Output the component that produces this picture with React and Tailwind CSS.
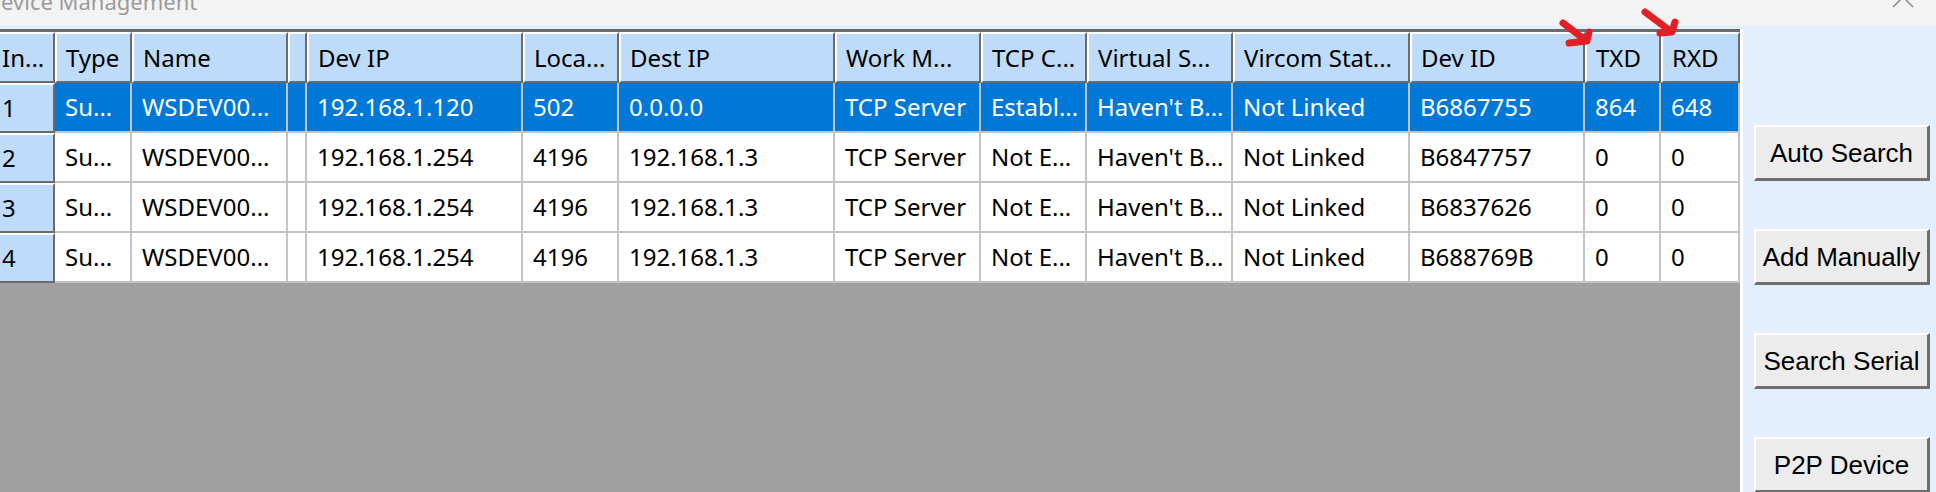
import React from 'react';

// columns of the device grid, widths include the 2px right grid line
const cols = [
  { title: 'In...', w: 'w-[55px]' },
  { title: 'Type', w: 'w-[77px]' },
  { title: 'Name', w: 'w-[156px]' },
  { title: '', w: 'w-[19px]' },
  { title: 'Dev IP', w: 'w-[216px]' },
  { title: 'Loca...', w: 'w-[96px]' },
  { title: 'Dest IP', w: 'w-[216px]' },
  { title: 'Work M...', w: 'w-[146px]' },
  { title: 'TCP C...', w: 'w-[106px]' },
  { title: 'Virtual S...', w: 'w-[146px]' },
  { title: 'Vircom Stat...', w: 'w-[177px]' },
  { title: 'Dev ID', w: 'w-[175px]' },
  { title: 'TXD', w: 'w-[76px]' },
  { title: 'RXD', w: 'w-[79px]' },
];

const rows = [
  ['1', 'Su...', 'WSDEV00...', '', '192.168.1.120', '502', '0.0.0.0', 'TCP Server', 'Establ...', "Haven't B...", 'Not Linked', 'B6867755', '864', '648'],
  ['2', 'Su...', 'WSDEV00...', '', '192.168.1.254', '4196', '192.168.1.3', 'TCP Server', 'Not E...', "Haven't B...", 'Not Linked', 'B6847757', '0', '0'],
  ['3', 'Su...', 'WSDEV00...', '', '192.168.1.254', '4196', '192.168.1.3', 'TCP Server', 'Not E...', "Haven't B...", 'Not Linked', 'B6837626', '0', '0'],
  ['4', 'Su...', 'WSDEV00...', '', '192.168.1.254', '4196', '192.168.1.3', 'TCP Server', 'Not E...', "Haven't B...", 'Not Linked', 'B688769B', '0', '0'],
];

const buttons = ['Auto Search', 'Add Manually', 'Search Serial', 'P2P Device'];

function HeaderRow() {
  return (
    <div className="flex h-[51px] shrink-0">
      {cols.map((c, i) =>
        i === 0 ? (
          <div key={i} className={`${c.w} shrink-0 flex items-center pl-[2px] bg-[#bedcfa] border-t-2 border-t-white border-r-2 border-b-2 border-r-[#6b6b6b] border-b-[#6b6b6b]`}>
            <span className="leading-none whitespace-nowrap">{c.title}</span>
          </div>
        ) : (
          <div key={i} className={`${c.w} shrink-0 flex items-center pl-[9px] bg-[#bedcfa] border-t-2 border-l-2 border-t-white border-l-white border-r-2 border-b-2 border-r-[#6b6b6b] border-b-[#6b6b6b] overflow-hidden`}>
            <span className="leading-none whitespace-nowrap">{c.title}</span>
          </div>
        )
      )}
    </div>
  );
}

function DataRow({ cells, selected }) {
  return (
    <div className="flex h-[50px] shrink-0">
      {cells.map((v, i) =>
        i === 0 ? (
          <div key={i} className={`${cols[i].w} shrink-0 flex items-center pl-[2px] bg-[#bedcfa] border-t-2 border-t-white border-r-2 border-b-2 border-r-[#6b6b6b] border-b-[#6b6b6b]`}>
            <span className="leading-none">{v}</span>
          </div>
        ) : (
          <div
            key={i}
            className={`${cols[i].w} shrink-0 flex items-center pl-[10px] border-r-2 border-b-2 border-[#c3c3c3] overflow-hidden ${selected ? 'bg-[#0078d7] text-white' : 'bg-white text-black'}`}
          >
            <span className="leading-none whitespace-nowrap">{v}</span>
          </div>
        )
      )}
    </div>
  );
}

export default function App() {
  return (
    <div className="relative w-[1936px] h-[492px] overflow-hidden bg-[#e3effd] flex flex-col font-['Noto_Sans',sans-serif] text-[24px] text-black">
      {/* title bar, mostly scrolled off the top */}
      <div className="h-[25px] shrink-0 bg-[#f3f3f3] flex justify-between items-start overflow-hidden">
        <span className="-ml-[15px] -mt-[10px] text-[22px] leading-[22px] text-[#9b9b9b] whitespace-nowrap">Device Management</span>
        <svg width="22" height="22" viewBox="0 0 22 22" className="-mt-[14px] mr-[22px] shrink-0">
          <path d="M1 1 L21 21 M21 1 L1 21" stroke="#8c8c8c" strokeWidth="1.5" fill="none" />
        </svg>
      </div>

      <div className="flex flex-1 min-h-0 pt-[4px]">
        {/* grid */}
        <div className="w-[1743px] shrink-0 border-r-[3px] border-r-white flex flex-col">
          <div className="flex-1 flex flex-col bg-[#a0a0a0] border-t-[3px] border-t-[#6b6b6b]">
            <HeaderRow />
            {rows.map((r, i) => (
              <DataRow key={i} cells={r} selected={i === 0} />
            ))}
          </div>
        </div>

        {/* buttons */}
        <div className="flex-1 flex flex-col pl-[11px] pt-[96px] gap-[48px]">
          {buttons.map((b) => (
            <button
              key={b}
              className="w-[176px] h-[56px] shrink-0 flex items-center justify-center bg-[#ececec] border-t-2 border-l-2 border-t-white border-l-white border-b-[3px] border-r-[3px] border-b-[#6e6e6e] border-r-[#6e6e6e] font-['Liberation_Sans',Arial,sans-serif] text-[26px] leading-none text-black whitespace-nowrap"
            >
              {b}
            </button>
          ))}
        </div>
      </div>

      {/* red annotation arrows */}
      <svg className="absolute inset-0 pointer-events-none" width="1936" height="492" viewBox="0 0 1936 492">
        <g stroke="#e31e24" strokeWidth="7" strokeLinecap="round" strokeLinejoin="round" fill="none">
          <path d="M1563 23 L1584 39" />
          <path d="M1569 43 L1587 41 L1589 32" />
          <path d="M1645 12 L1669 30" />
          <path d="M1660 33 L1672 32 L1675 22" />
        </g>
      </svg>
    </div>
  );
}
